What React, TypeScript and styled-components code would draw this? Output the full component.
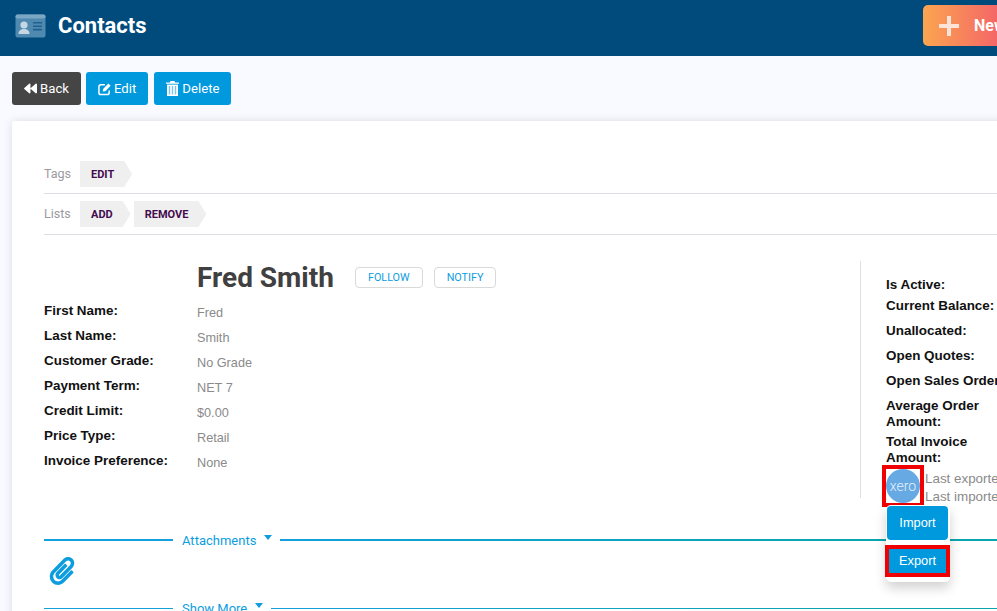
import styled, { createGlobalStyle } from 'styled-components';
import { FaBackward, FaPaperclip } from 'react-icons/fa';

const GlobalStyle = createGlobalStyle`
  html, body {
    margin: 0;
    padding: 0;
    background: #f9faff;
    font-family: Roboto, "Liberation Sans", sans-serif;
    overflow: hidden;
  }
`;

const PROFILE_ROWS = [
  ['First Name:', 'Fred'],
  ['Last Name:', 'Smith'],
  ['Customer Grade:', 'No Grade'],
  ['Payment Term:', 'NET 7'],
  ['Credit Limit:', '$0.00'],
  ['Price Type:', 'Retail'],
  ['Invoice Preference:', 'None'],
];

const App = () => {
  return (
    <Page>
      <GlobalStyle />
      <Header>
        <HeaderTitle>
          <svg width="31" height="24" viewBox="0 0 31 24">
            <rect x="0.5" y="0.5" width="30" height="23" rx="2" fill="#5089b0" />
            <rect x="0.5" y="0.5" width="30" height="4" rx="2" fill="#7ba6c4" />
            <circle cx="9" cy="11" r="3.6" fill="#c6d7e4" />
            <path d="M3.5 20c0-3.6 2.5-5 5.5-5s5.5 1.4 5.5 5z" fill="#c6d7e4" />
            <path d="M18 8h9v1.6h-9zM18 11.4h9V13h-9zM18 14.8h9v1.6h-9z" fill="#21608d" />
          </svg>
          <Title>Contacts</Title>
        </HeaderTitle>
        <NewButton>
          <PlusIcon viewBox="0 0 20 20">
            <path d="M8 0h4v8h8v4h-8v8H8v-8H0V8h8z" fill="#fde3d8" />
          </PlusIcon>
          New Contact
        </NewButton>
      </Header>
      <Toolbar>
        <ActionButton $dark>
          <FaBackward size={13} />
          Back
        </ActionButton>
        <ActionButton>
          <svg width="13" height="14" viewBox="0 0 14 14">
            <path
              d="M12 8.5V11a2 2 0 0 1-2 2H3a2 2 0 0 1-2-2V4.5a2 2 0 0 1 2-2h4.5"
              fill="none"
              stroke="#fff"
              strokeWidth="1.6"
            />
            <path d="M5 9.6l.5-2.7L11.2 1.2l2.4 2.4-5.7 5.7z" fill="#fff" />
          </svg>
          Edit
        </ActionButton>
        <ActionButton>
          <svg width="13" height="15" viewBox="0 0 13 15">
            <path d="M4.5 0h4l.6 1.6H13v1.2H0V1.6h3.9z" fill="#fff" />
            <path d="M1 3.6h11V15H1z" fill="#fff" />
            <path d="M2.8 5h1.4v8.6H2.8zM5.8 5h1.4v8.6H5.8zM8.8 5h1.4v8.6H8.8z" fill="#7cc6ec" />
          </svg>
          Delete
        </ActionButton>
      </Toolbar>
      <Card>
        <TagRow $top={8}>
          <TagLabel>Tags</TagLabel>
          <Tag>EDIT</Tag>
        </TagRow>
        <TagRow $top={7}>
          <TagLabel>Lists</TagLabel>
          <Tag>ADD</Tag>
          <Tag>REMOVE</Tag>
        </TagRow>
        <Details>
          <ProfileColumn>
            <NameRow>
              <Name>Fred Smith</Name>
              <OutlineButton>FOLLOW</OutlineButton>
              <OutlineButton>NOTIFY</OutlineButton>
            </NameRow>
            {PROFILE_ROWS.map(([label, value]) => (
              <ProfileRow key={label}>
                <FieldLabel>{label}</FieldLabel>
                <FieldValue>{value}</FieldValue>
              </ProfileRow>
            ))}
          </ProfileColumn>
          <SummaryColumn>
            <SummaryLabel>Is Active:</SummaryLabel>
            <SummaryLabel>Current Balance:</SummaryLabel>
            <SummaryLabel $gap={9}>Unallocated:</SummaryLabel>
            <SummaryLabel $gap={9}>Open Quotes:</SummaryLabel>
            <SummaryLabel $gap={9}>Open Sales Orders:</SummaryLabel>
            <SummaryLabel $gap={9} $narrow>Average Order Amount:</SummaryLabel>
            <SummaryLabel $gap={4} $narrow>Total Invoice Amount:</SummaryLabel>
            <XeroRow>
              <XeroBadge>
                <XeroLogo>xero</XeroLogo>
              </XeroBadge>
              <XeroStatus>
                <div>Last exported</div>
                <div>Last imported</div>
              </XeroStatus>
              <XeroMenu>
                <XeroAction>Import</XeroAction>
                <XeroAction $marked>Export</XeroAction>
              </XeroMenu>
            </XeroRow>
          </SummaryColumn>
        </Details>
        <Section>
          <SectionLine $width={129} />
          <SectionTitle>
            Attachments
            <Caret />
          </SectionTitle>
          <SectionLine $fade />
        </Section>
        <ClipBox>
          <FaPaperclip size={28} color="#0d9ddf" />
        </ClipBox>
        <Section>
          <SectionLine $width={129} $thin />
          <SectionTitle>
            Show More
            <Caret />
          </SectionTitle>
          <SectionLine $thin $fade />
        </Section>
      </Card>
    </Page>
  );
};

const Page = styled.div`
  width: 997px;
  height: 611px;
  overflow: hidden;
`;

const Header = styled.header`
  display: flex;
  align-items: center;
  justify-content: space-between;
  box-sizing: border-box;
  width: 1160px;
  height: 56px;
  padding: 0 0 5px 15px;
  background: #004b7c;
`;

const HeaderTitle = styled.div`
  display: flex;
  align-items: center;
  gap: 12px;
`;

const Title = styled.h1`
  margin: 0;
  color: #fff;
  font-size: 22px;
  font-weight: 700;
`;

const NewButton = styled.button`
  display: flex;
  align-items: center;
  gap: 15px;
  box-sizing: border-box;
  width: 237px;
  height: 41px;
  padding: 0 16px;
  border: 0;
  border-radius: 5px;
  background: linear-gradient(90deg, #fba550, #f2566d 40%);
  color: #fff;
  font-family: inherit;
  font-size: 16px;
  font-weight: 700;
  white-space: nowrap;
`;

const PlusIcon = styled.svg`
  width: 20px;
  height: 20px;
`;

const Toolbar = styled.div`
  display: flex;
  gap: 5px;
  padding: 16px 12px 16px;
`;

const ActionButton = styled.button<{ $dark?: boolean }>`
  display: flex;
  align-items: center;
  gap: 3px;
  height: 33px;
  padding: 0 12px;
  border: 0;
  border-radius: 3px;
  background: ${(p) => (p.$dark ? '#454545' : '#0099dd')};
  color: #fff;
  font-family: inherit;
  font-size: 13.2px;
  &:last-child {
    margin-left: 1px;
  }
`;

const Card = styled.main`
  box-sizing: border-box;
  width: 1160px;
  height: 520px;
  margin-left: 12px;
  padding: 32px 32px 0;
  border-radius: 3px;
  background: #fff;
  box-shadow: 0 0 8px rgba(0, 0, 0, 0.12);
`;

const TagRow = styled.div<{ $top: number }>`
  display: flex;
  align-items: flex-start;
  gap: 3px;
  box-sizing: border-box;
  height: 41px;
  padding-top: ${(p) => p.$top}px;
  border-bottom: 1px solid #dcdfe3;
`;

const TagLabel = styled.span`
  width: 33px;
  color: #9a9a9f;
  font-size: 12.5px;
  line-height: 26px;
`;

const Tag = styled.span`
  display: flex;
  align-items: center;
  height: 26px;
  padding: 0 18px 0 11px;
  background: #efefef;
  clip-path: polygon(0 0, calc(100% - 8px) 0, 100% 50%, calc(100% - 8px) 100%, 0 100%);
  color: #430a4f;
  font-size: 11px;
  font-weight: 700;
`;

const Details = styled.div`
  display: flex;
  box-sizing: border-box;
  height: 298px;
  padding-top: 26px;
`;

const ProfileColumn = styled.div`
  width: 816px;
`;

const NameRow = styled.div`
  display: flex;
  align-items: center;
  gap: 11px;
  height: 32px;
  margin-left: 153px;
`;

const Name = styled.h2`
  margin: 0 10px 0 0;
  color: #404040;
  font-size: 28px;
  font-weight: 700;
  white-space: nowrap;
`;

const OutlineButton = styled.button`
  height: 21px;
  padding: 0 12px;
  border: 1px solid #d9d9d9;
  border-radius: 4px;
  background: #fff;
  color: #0d9ddf;
  font-family: inherit;
  font-size: 10.8px;
`;

const ProfileRow = styled.div`
  display: flex;
  align-items: center;
  height: 25px;
  &:nth-child(2) {
    margin-top: 5px;
  }
`;

const FieldLabel = styled.span`
  width: 153px;
  color: #111;
  font-family: "Liberation Sans", sans-serif;
  font-size: 13.45px;
  font-weight: 700;
`;

const FieldValue = styled.span`
  padding-top: 4px;
  color: #8a8a8a;
  font-family: "Liberation Sans", sans-serif;
  font-size: 12.7px;
`;

const SummaryColumn = styled.div`
  box-sizing: border-box;
  width: 240px;
  height: 237px;
  padding: 11px 0 0 25px;
  border-left: 1px solid #dcdfe3;
`;

const SummaryLabel = styled.div<{ $gap?: number; $narrow?: boolean }>`
  width: ${(p) => (p.$narrow ? '110px' : 'auto')};
  margin-top: ${(p) => p.$gap ?? 5}px;
  color: #111;
  font-family: "Liberation Sans", sans-serif;
  font-size: 13.45px;
  font-weight: 700;
  line-height: 16px;
  white-space: ${(p) => (p.$narrow ? 'normal' : 'nowrap')};
`;

const XeroRow = styled.div`
  position: relative;
  display: flex;
  gap: 1px;
  margin-top: -1px;
`;

const XeroBadge = styled.div`
  display: flex;
  align-items: center;
  justify-content: center;
  flex-shrink: 0;
  box-sizing: border-box;
  width: 42px;
  height: 42px;
  margin-left: -4px;
  border: 4px solid #f00000;
`;

const XeroLogo = styled.div`
  display: flex;
  align-items: center;
  justify-content: center;
  flex-shrink: 0;
  width: 34px;
  height: 34px;
  border-radius: 50%;
  background: #66a9e3;
  color: #e6f1fb;
  font-size: 14px;
  font-weight: 300;
`;

const XeroStatus = styled.div`
  padding-top: 5px;
  color: #8a8a8a;
  font-family: "Liberation Sans", sans-serif;
  font-size: 13.4px;
  line-height: 18px;
  white-space: nowrap;
`;

const XeroMenu = styled.div`
  position: absolute;
  top: 40px;
  left: 0;
  display: flex;
  flex-direction: column;
  gap: 5px;
  box-sizing: border-box;
  width: 64px;
  height: 77px;
  padding: 1px 2px 5px 1px;
  border-radius: 5px;
  background: #fff;
  box-shadow: 0 6px 12px rgba(0, 0, 0, 0.18);
`;

const XeroAction = styled.button<{ $marked?: boolean }>`
  flex-shrink: 0;
  box-sizing: border-box;
  height: ${(p) => (p.$marked ? '32px' : '34px')};
  margin: ${(p) => (p.$marked ? '0 -2px 0 -2px' : '0')};
  padding: 0 0 2px;
  border: ${(p) => (p.$marked ? '4px solid #f00000' : '0')};
  border-radius: ${(p) => (p.$marked ? '0' : '4px')};
  background: #0099dd;
  color: #fff;
  font-family: "Liberation Sans", sans-serif;
  font-size: 12.8px;
`;

const Section = styled.div`
  display: flex;
  align-items: center;
  gap: 9px;
  height: 14px;
`;

const SectionLine = styled.div<{ $width?: number; $thin?: boolean; $fade?: boolean }>`
  flex: ${(p) => (p.$width ? `0 0 ${p.$width}px` : '1')};
  height: ${(p) => (p.$thin ? '1px' : '2px')};
  background: ${(p) => (p.$fade ? 'linear-gradient(90deg, #14a0dc, #0aa6ad 70%)' : '#14a0dc')};
`;

const SectionTitle = styled.div`
  display: flex;
  align-items: center;
  gap: 8px;
  margin-right: -1px;
  color: #0d9ddf;
  font-size: 13px;
`;

const Caret = styled.span`
  width: 0;
  height: 0;
  margin-bottom: 5px;
  border-left: 4px solid transparent;
  border-right: 4px solid transparent;
  border-top: 5px solid #0d9ddf;
`;

const ClipBox = styled.div`
  display: flex;
  align-items: center;
  box-sizing: border-box;
  height: 54px;
  padding: 0 0 6px 4px;
`;

export default App;
